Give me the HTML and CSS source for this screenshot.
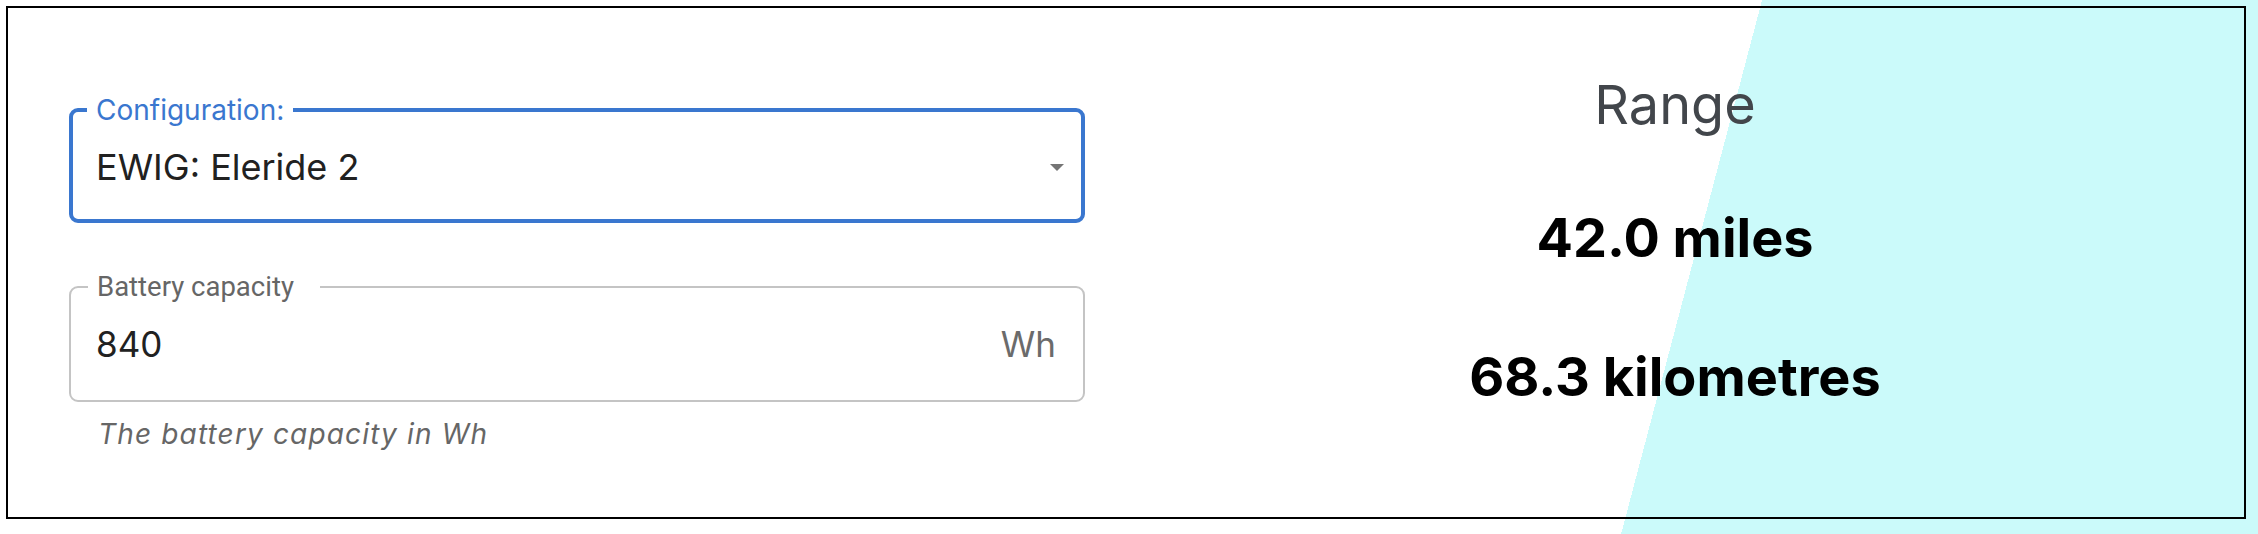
FILE: index.html
```html
<!DOCTYPE html>
<html lang="en">
<head>
<meta charset="utf-8">
<title>Range calculator</title>
<link rel="stylesheet" href="styles.css">
</head>
<body>
<div class="page">
  <div class="card">
    <div class="form">
      <fieldset class="field field-focused">
        <legend class="field-label">Configuration:</legend>
        <div class="field-inner">
          <span class="field-value field-value-select">EWIG: Eleride 2</span>
          <svg class="field-arrow" width="14" height="7" viewBox="0 0 14 7" aria-hidden="true"><path d="M0 0h14L7 7z"/></svg>
        </div>
      </fieldset>
      <fieldset class="field field-plain">
        <legend class="field-label">Battery capacity</legend>
        <div class="field-inner">
          <span class="field-value">840</span>
          <span class="field-adorn">Wh</span>
        </div>
      </fieldset>
      <p class="helper">The battery capacity in Wh</p>
    </div>
    <div class="result">
      <h2 class="result-title">Range</h2>
      <p class="result-value">42.0 miles</p>
      <p class="result-value">68.3 kilometres</p>
    </div>
  </div>
</div>
</body>
</html>
```
FILE: styles.css
```css
html, body {
  margin: 0;
  padding: 0;
}

body {
  font-family: Inter, "Noto Sans", "Liberation Sans", sans-serif;
  color: #212121;
}

.page {
  width: 100%;
  height: 534px;
  box-sizing: border-box;
  padding: 6px 12px 15px 6px;
  background: linear-gradient(104.79deg, #ffffff 1703.7px, #cbfafa 1703.7px);
}

.card {
  height: 513px;
  box-sizing: border-box;
  border: 2px solid #000;
  display: grid;
  grid-template-columns: 1fr 1fr;
  column-gap: 82px;
  padding: 0 61px;
  align-items: start;
}

/* ---------- left column ---------- */
.form {
  padding-top: 87px;
}

.field {
  margin: 0;
  padding: 0;
  min-width: 0;
  width: 100%;
  box-sizing: border-box;
  border-radius: 9px;
}

.field-focused {
  border: 4px solid #3a77cf;
}

.field-plain {
  border: 2px solid #c4c4c4;
  margin-top: 49px;
}

.field-label {
  font-size: 28px;
  line-height: 30px;
  padding: 0 9px;
  white-space: nowrap;
}

.field-focused .field-label {
  color: #3a77cf;
  margin-left: 14px;
}

.field-plain .field-label {
  font-family: Roboto, "Liberation Sans", sans-serif;
  font-size: 27.5px;
  color: #666666;
  margin-left: 17px;
  padding-right: 26px;
}

.field-inner {
  display: flex;
  align-items: center;
  box-sizing: border-box;
}

.field-focused .field-inner {
  height: 94px;
  padding: 0 17px 10px 23px;
}

.field-plain .field-inner {
  height: 98px;
  padding: 0 27px 14px 25px;
}

.field-value {
  font-size: 35px;
  line-height: 44px;
  color: #212121;
}

.field-value-select {
  font-size: 36px;
}

.field-arrow {
  margin-left: auto;
  fill: #757575;
  display: block;
}

.field-adorn {
  margin-left: auto;
  font-size: 35px;
  line-height: 44px;
  color: #6b6b6b;
}

.helper {
  margin: 10px 0 0 29px;
  font-size: 28px;
  line-height: 45px;
  font-style: italic;
  letter-spacing: 1.15px;
  color: #666666;
}

/* ---------- right column ---------- */
.result {
  padding-top: 66px;
  display: flex;
  flex-direction: column;
  align-items: center;
  gap: 69px;
}

.result-title {
  margin: 0;
  font-size: 54px;
  line-height: 62px;
  font-weight: 400;
  color: #42464b;
}

.result-value {
  margin: 0;
  font-size: 54px;
  line-height: 66px;
  font-weight: 700;
  color: #000;
}

.result-value + .result-value {
  margin-top: 4px;
}
```
